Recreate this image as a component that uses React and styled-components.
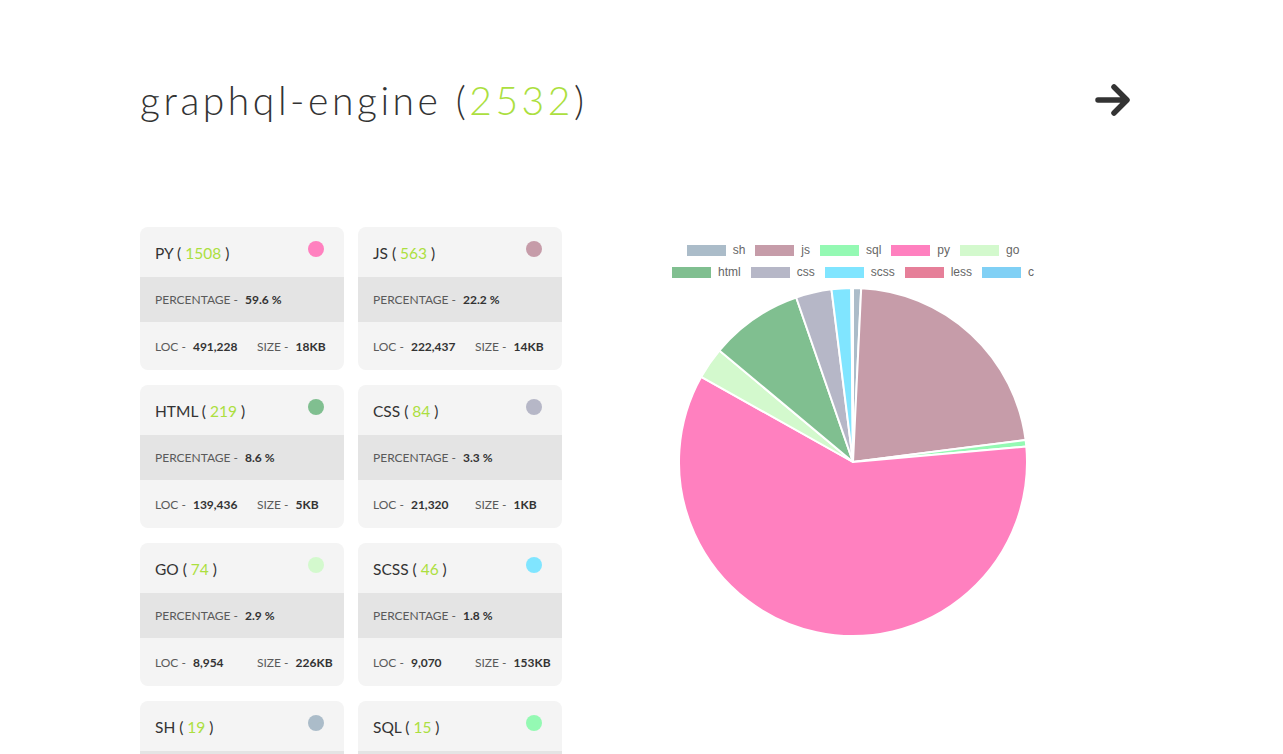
import React from "react";
import styled, { createGlobalStyle } from "styled-components";

const Global = createGlobalStyle`
  html, body { margin: 0; padding: 0; background: #fff; }
  body { font-family: "Lato", "Noto Sans", sans-serif; color: #333; }
`;

const langs = [
  { key: "sh", count: 19, color: "#abbcc9", pct: "0.8", loc: "1,210", size: "2KB" },
  { key: "js", count: 563, color: "#c69ca9", pct: "22.2", loc: "222,437", size: "14KB" },
  { key: "sql", count: 15, color: "#94f9b3", pct: "0.6", loc: "3,112", size: "4KB" },
  { key: "py", count: 1508, color: "#ff80bf", pct: "59.6", loc: "491,228", size: "18KB" },
  { key: "go", count: 74, color: "#d3f9cd", pct: "2.9", loc: "8,954", size: "226KB" },
  { key: "html", count: 219, color: "#80bf90", pct: "8.6", loc: "139,436", size: "5KB" },
  { key: "css", count: 84, color: "#b6b7c7", pct: "3.3", loc: "21,320", size: "1KB" },
  { key: "scss", count: 46, color: "#80e5ff", pct: "1.8", loc: "9,070", size: "153KB" },
  { key: "less", count: 3, color: "#e67f99", pct: "0.1", loc: "412", size: "1KB" },
  { key: "c", count: 1, color: "#80d0f5", pct: "0.0", loc: "120", size: "1KB" },
];

const cardOrder = ["py", "js", "html", "css", "go", "scss", "sh", "sql", "less", "c"];

const Page = styled.div`
  padding: 78px 0 40px 140px;
  width: 990px;
`;

const Header = styled.header`
  display: flex;
  justify-content: space-between;
  align-items: center;
  height: 44px;
`;

const Title = styled.h1`
  margin: 0;
  font-family: "Lato", sans-serif;
  font-weight: 300;
  font-size: 39px;
  letter-spacing: 3.55px;
  color: #333;
  line-height: 44px;
`;

const Num = styled.span`
  color: #acdf3f;
`;

const ArrowBtn = styled.div`
  width: 38px;
  height: 38px;
  display: flex;
  align-items: center;
  justify-content: center;
  margin-right: -2px;
`;

const Content = styled.div`
  display: flex;
  margin-top: 105px;
`;

const Grid = styled.div`
  display: grid;
  grid-template-columns: 204px 204px;
  column-gap: 14px;
  row-gap: 15px;
  align-content: start;
`;

const Card = styled.div`
  background: #f4f4f4;
  border-radius: 8px;
  overflow: hidden;
  font-family: "Lato", sans-serif;
`;

const CardHead = styled.div`
  height: 50px;
  display: flex;
  align-items: center;
  justify-content: space-between;
  padding: 0 20px 0 15px;
`;

const Name = styled.div`
  font-size: 15.5px;
  color: #333;
  margin-top: 2px;
`;

const Dot = styled.span`
  width: 16px;
  height: 16px;
  border-radius: 50%;
  background: ${(p) => p.$c};
  margin-top: -6px;
`;

const PctRow = styled.div`
  height: 45px;
  background: #e4e4e4;
  display: flex;
  align-items: center;
  padding-left: 15px;
  font-size: 12px;
`;

const Label = styled.span`
  color: #5a5a5a;
  font-weight: 400;
`;

const Val = styled.b`
  color: #333;
  font-weight: 700;
  margin-left: 7px;
`;

const Bottom = styled.div`
  height: 48px;
  display: grid;
  grid-template-columns: 1fr 1fr;
  align-items: center;
  font-size: 12px;
`;

const Cell = styled.div`
  padding-left: 15px;
  white-space: nowrap;
`;

const ChartCol = styled.div`
  flex: 1;
  display: flex;
  flex-direction: column;
  align-items: center;
  padding-top: 15px;
  padding-left: 10px;
`;

const Legend = styled.div`
  display: flex;
  flex-wrap: wrap;
  justify-content: center;
  width: 380px;
  row-gap: 6px;
  column-gap: 10px;
  margin-left: 4px;
  font-family: "Liberation Sans", Arial, sans-serif;
  font-size: 12px;
  color: #666;
`;

const LegendItem = styled.div`
  display: flex;
  align-items: center;
  gap: 7px;
  height: 16px;
`;

const Swatch = styled.span`
  width: 39px;
  height: 11px;
  background: ${(p) => p.$c};
`;

const PieWrap = styled.div`
  margin-top: 6px;
  margin-left: 4px;
`;

function Pie() {
  const total = langs.reduce((a, l) => a + l.count, 0);
  const cx = 176, cy = 176, r = 174;
  let ang = -Math.PI / 2;
  const paths = langs.map((l) => {
    const a0 = ang;
    const a1 = ang + (l.count / total) * Math.PI * 2;
    ang = a1;
    const x0 = cx + r * Math.cos(a0), y0 = cy + r * Math.sin(a0);
    const x1 = cx + r * Math.cos(a1), y1 = cy + r * Math.sin(a1);
    const large = a1 - a0 > Math.PI ? 1 : 0;
    return (
      <path
        key={l.key}
        d={`M${cx},${cy} L${x0},${y0} A${r},${r} 0 ${large} 1 ${x1},${y1} Z`}
        fill={l.color}
        stroke="#fff"
        strokeWidth="2"
        strokeLinejoin="round"
      />
    );
  });
  return (
    <svg width="352" height="352" viewBox="0 0 352 352">
      {paths}
    </svg>
  );
}

export default function App() {
  const byKey = Object.fromEntries(langs.map((l) => [l.key, l]));
  return (
    <>
      <Global />
      <Page>
        <Header>
          <Title>
            graphql-engine (<Num>2532</Num>)
          </Title>
          <ArrowBtn>
            <svg width="36" height="34" viewBox="0 0 36 34">
              <path
                d="M3 17 H31 M19 4 L32 17 L19 30"
                fill="none"
                stroke="#333"
                strokeWidth="5.5"
                strokeLinecap="round"
                strokeLinejoin="round"
              />
            </svg>
          </ArrowBtn>
        </Header>
        <Content>
          <Grid>
            {cardOrder.map((k) => {
              const l = byKey[k];
              return (
                <Card key={k}>
                  <CardHead>
                    <Name>
                      {k.toUpperCase()} ( <Num>{l.count}</Num> )
                    </Name>
                    <Dot $c={l.color} />
                  </CardHead>
                  <PctRow>
                    <Label>PERCENTAGE -</Label>
                    <Val>{l.pct} %</Val>
                  </PctRow>
                  <Bottom>
                    <Cell>
                      <Label>LOC -</Label>
                      <Val>{l.loc}</Val>
                    </Cell>
                    <Cell>
                      <Label>SIZE -</Label>
                      <Val>{l.size}</Val>
                    </Cell>
                  </Bottom>
                </Card>
              );
            })}
          </Grid>
          <ChartCol>
            <Legend>
              {langs.map((l) => (
                <LegendItem key={l.key}>
                  <Swatch $c={l.color} />
                  {l.key}
                </LegendItem>
              ))}
            </Legend>
            <PieWrap>
              <Pie />
            </PieWrap>
          </ChartCol>
        </Content>
      </Page>
    </>
  );
}
